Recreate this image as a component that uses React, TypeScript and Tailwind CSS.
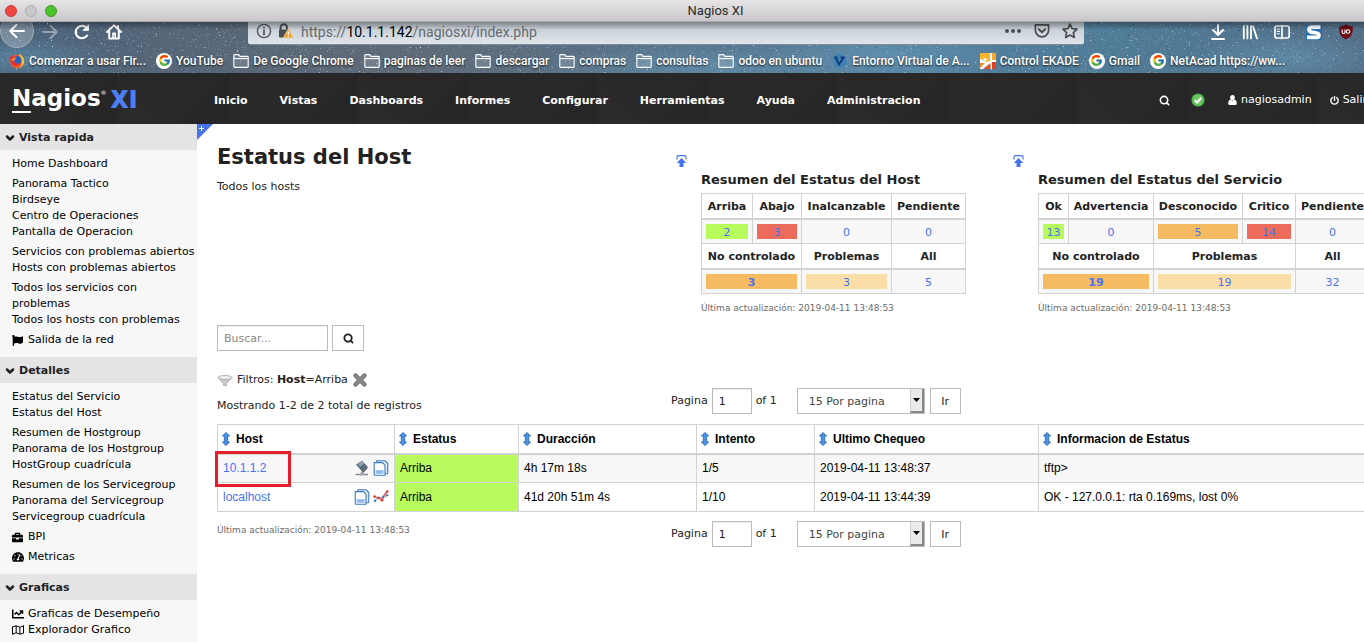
import React from "react";
import {
  FaBriefcase,
  FaChartLine,
  FaFlag,
  FaPowerOff,
  FaRegMap,
  FaTachometerAlt,
} from "react-icons/fa";
import { FcGoogle } from "react-icons/fc";
import { ChevronDown, Search } from "lucide-react";

/* ---------- Browser window ---------- */

const hues = ["#ffffff", "#d5e2ec", "#b4bec8", "#8fb6d2", "#26384c"];

const stars = (() => {
  let seed = 77;
  const next = () => {
    seed = (seed * 1103515245 + 12345) % 2147483648;
    return seed / 2147483648;
  };
  return Array.from({ length: 7000 }, (_, id) => ({
    id,
    x: Math.floor(next() * 1600),
    y: Math.floor(next() * 52),
    o: 0.12 + next() * next() * next() * 0.75,
    c: hues[Math.floor(next() * 5)],
  }));
})();

function StarField() {
  return (
    <svg className="absolute inset-0 h-full w-full" preserveAspectRatio="xMinYMin slice" aria-hidden="true">
      <defs>
        <linearGradient id="sky" x1="0" x2="1" y1="0" y2="0">
          <stop offset="0" stopColor="#4a647d" />
          <stop offset="0.12" stopColor="#566678" />
          <stop offset="0.3" stopColor="#5f6a77" />
          <stop offset="0.5" stopColor="#58748c" />
          <stop offset="0.68" stopColor="#54809e" />
          <stop offset="0.82" stopColor="#507c98" />
          <stop offset="1" stopColor="#546f88" />
        </linearGradient>
        <radialGradient id="glow">
          <stop offset="0" stopColor="#6aa3c4" stopOpacity="0.45" />
          <stop offset="1" stopColor="#6aa3c4" stopOpacity="0" />
        </radialGradient>
      </defs>
      <rect width="100%" height="100%" fill="url(#sky)" />
      <ellipse cx="20" cy="36" rx="90" ry="22" fill="url(#glow)" />
      <ellipse cx="700" cy="44" rx="170" ry="22" fill="url(#glow)" />
      <ellipse cx="880" cy="34" rx="120" ry="30" fill="url(#glow)" />
      <ellipse cx="1290" cy="36" rx="100" ry="26" fill="url(#glow)" />
      {stars.map((s) => (
        <rect key={s.id} x={s.x} y={s.y} width="1" height="1" fill={s.c} opacity={s.o} />
      ))}
    </svg>
  );
}

function TitleBar() {
  return (
    <div className="relative z-10 flex h-[22px] items-center border-b border-[#a9a7a9] bg-gradient-to-b from-[#e6e4e6] to-[#c9c7c9] pl-[5px]">
      <div className="flex gap-2">
        <span className="h-3 w-3 rounded-full border border-[#d03a35] bg-[#ee4540]" />
        <span className="h-3 w-3 rounded-full border border-[#b0aeb0] bg-[#c9c7c9]" />
        <span className="h-3 w-3 rounded-full border border-[#3f9d26] bg-[#4cc22c]" />
      </div>
      <div className="flex-1 pl-[10px] pt-px text-center text-[13px] text-[#2b2b2b]">Nagios XI</div>
    </div>
  );
}

function Stroke({ children, color = "#fff", w = 2 }: { children: React.ReactNode; color?: string; w?: number }) {
  return (
    <svg width="16" height="16" viewBox="0 0 16 16" fill="none" stroke={color} strokeWidth={w} strokeLinecap="round" strokeLinejoin="round" className="shrink-0">
      {children}
    </svg>
  );
}

function UrlBar() {
  return (
    <div className="flex h-[23px] min-w-0 flex-1 items-center rounded-b-[3px] border-b border-[#7b8d9c] bg-gradient-to-b from-[#bfc8cf] to-[#e0e5ea] pl-2 pr-[6px] text-[14px] text-[#666b70]">
      <div className="flex min-w-0 flex-1 items-center gap-[5px] pb-1">
        <Stroke color="#55595e" w={1.4}>
          <circle cx="8" cy="8" r="6.6" />
          <path d="M8 7.2V11.6M8 4.6V4.8" strokeWidth="1.8" />
        </Stroke>
        <svg width="17" height="16" viewBox="0 0 17 16" className="shrink-0">
          <path d="M3.6 7V4.4a3.2 3.2 0 0 1 6.4 0V7" fill="none" stroke="#4a4d50" strokeWidth="2" />
          <rect x="2" y="6.6" width="10" height="8" rx="1" fill="#4a4d50" />
          <path d="M11.4 5.2 16.6 15H6.2Z" fill="#f5a02c" stroke="#e4ddd2" strokeWidth="0.6" />
          <path d="M11.4 8.4v3M11.4 12.6v1.1" stroke="#fff" strokeWidth="1.3" />
        </svg>
        <span className="ml-[2px] mt-[2px] whitespace-nowrap">
          https://<span className="text-black">10.1.1.142</span>/nagiosxi/index.php
        </span>
      </div>
      <div className="flex items-center gap-3 pb-1">
        <svg width="18" height="16" viewBox="0 0 18 16" fill="#4a4d50">
          <circle cx="3" cy="8" r="2" />
          <circle cx="9" cy="8" r="2" />
          <circle cx="15" cy="8" r="2" />
        </svg>
        <Stroke color="#4a4d50" w={1.7}>
          <path d="M1.4 1.8h13.2v5.4a6.6 6.6 0 0 1-13.2 0Z" />
          <path d="M4.8 6.2 8 9.2l3.2-3" strokeWidth="2" />
        </Stroke>
        <Stroke color="#4a4d50" w={1.7}>
          <path d="m8 1.1 2.1 4.5 4.9.6-3.6 3.4.9 4.9L8 12.1l-4.3 2.4.9-4.9L1 6.2l4.9-.6Z" />
        </Stroke>
      </div>
    </div>
  );
}

function NavBar() {
  return (
    <div className="relative flex h-[26px] items-start pr-[10px]">
      <div className="flex h-[19px] w-[248px] shrink-0 items-center gap-4">
        <button aria-label="Atrás" className="-mt-px flex h-[34px] w-[34px] shrink-0 items-center justify-center rounded-full border border-[#a3a9af] bg-white/25">
          <Stroke>
            <path d="M15 8H1.5M7.5 1.8 1.3 8l6.2 6.2" />
          </Stroke>
        </button>
        <button aria-label="Adelante" className="-ml-2 opacity-40">
          <Stroke>
            <path d="M1 8h13.5M8.5 1.8 14.7 8l-6.2 6.2" />
          </Stroke>
        </button>
        <button aria-label="Recargar">
          <Stroke w={2.2}>
            <path d="M13 11.6A6.2 6.2 0 1 1 13.2 4.8" />
            <path d="M14.6 1v5.4H9.2Z" fill="#fff" strokeWidth="0.8" />
          </Stroke>
        </button>
        <button aria-label="Inicio">
          <Stroke>
            <path d="M1 8 8 1.2 15 8M3.2 7.4V14.6H12.8V7.4M12 2v2" />
            <path d="M7 14V9.4h2.2V14" strokeWidth="1.6" />
          </Stroke>
        </button>
      </div>
      <UrlBar />
      <div className="flex h-[19px] items-center gap-4 pl-[126px]">
        <button aria-label="Descargas">
          <Stroke>
            <path d="M8 1v9.5M3 6l5 5 5-5M2 15h12" />
          </Stroke>
        </button>
        <button aria-label="Catálogo">
          <Stroke>
            <path d="M1.8 2v12.4M5.4 2v12.4M9 2v12.4M11 2.4l4 12" strokeWidth="1.8" />
          </Stroke>
        </button>
        <button aria-label="Barra lateral">
          <Stroke w={1.7}>
            <rect x="1" y="2" width="14.2" height="12" rx="2" />
            <path d="M8 2v12" />
            <path d="M3.4 5h2M3.4 7.4h2M3.4 9.8h2" strokeWidth="1.1" />
          </Stroke>
        </button>
        <button aria-label="Extensión S">
          <svg width="16" height="16" viewBox="0 0 16 16">
            <rect y="1" width="16" height="15" fill="#2a6fb4" />
            <path d="M14.4 3.200H6C2 3.200 2 7.400 5.600 8.200L10.400 9C14 9.800 13.600 13.400 10.200 13.400H1" fill="none" stroke="#fff" strokeWidth="3.8" />
          </svg>
        </button>
        <button aria-label="Bloqueador">
          <svg width="16" height="16" viewBox="0 0 16 16">
            <path d="M8 .6C10.4 2 12.6 2.4 14.8 2.4c.2 6-.6 10-6.8 13C1.800 12.400 1 8.400 1.200 2.400 3.400 2.400 5.600 2 8 .6Z" fill="#6d0d14" />
            <path d="M4.200 5.600v2.600c0 1.700 2.800 1.700 2.800 0V5.600" fill="none" stroke="#fff" strokeWidth="1.100" />
            <circle cx="10" cy="7.500" r="1.800" fill="none" stroke="#fff" strokeWidth="1.100" />
          </svg>
        </button>
      </div>
    </div>
  );
}

function FolderIcon() {
  return (
    <svg width="16" height="16" viewBox="0 0 16 16" fill="#ffffff22" stroke="#fff" strokeWidth="1.1" className="shrink-0">
      <path d="M.8 13.6V2.400Q.8 1.600 1.600 1.600H5.600L7 3.400H14.400Q15.200 3.400 15.200 4.200V13.600Q15.200 14.400 14.400 14.400H1.600Q.8 14.400.8 13.600Z" />
      <path d="M.8 5.600H15.200" />
    </svg>
  );
}

function GoogleIcon() {
  return (
    <span className="flex h-4 w-4 shrink-0 items-center justify-center rounded-full bg-white">
      <FcGoogle size={13} />
    </span>
  );
}

function FirefoxIcon() {
  return (
    <svg width="16" height="16" viewBox="0 0 16 16" className="shrink-0">
      <circle cx="8" cy="8.500" r="6.800" fill="#f0562b" />
      <path d="M10 1c4 1.400 6 5 5 9-1 3.400-4 5.400-7 5.400 4-1 5-4 4.400-7C12 5.400 10.600 4 10 1Z" fill="#ffc02e" />
      <circle cx="8.400" cy="7.200" r="4.200" fill="#2b62c0" />
      <path d="M1 4.400C2 3.600 2.400 2.600 2.800 1.800 3.800 3.600 5.400 4 7.600 4.800 6.400 6 5 6.400 5.200 8.400c1 2.600 4 2.600 6 1.600-1.600 3.600-8 3.600-9.400-.8Z" fill="#e5322d" />
      <path d="M2.200 6.400C3.400 5 5.600 4.800 7.600 4.800 6 5.800 5 6.600 5.200 8.400Z" fill="#f8892c" />
    </svg>
  );
}

function VirtualIcon() {
  return (
    <svg width="16" height="16" viewBox="0 0 16 16" className="shrink-0">
      <circle cx="8" cy="8" r="7" fill="#3f83b5" />
      <path d="M2 4.500h3.500M8.500 4.500h4.500M4 5 7 11.500 11.300 5" fill="none" stroke="#123e7e" strokeWidth="2" />
    </svg>
  );
}

function EkadeIcon() {
  return (
    <svg width="16" height="16" viewBox="0 0 16 16" className="shrink-0">
      <rect width="16" height="16" fill="#fff" />
      <path d="M0 0h10v8L6 9 0 6Z" fill="#f7b42c" />
      <path d="M0 6 6 9 0 9Z" fill="#fff" />
      <path d="M3 4.500 8 6.500 4 8Z" fill="#fff" />
      <path d="M12 0H16v7h-4Z" fill="#f5a92b" />
      <path d="M3 16 10.500 10V16Z" fill="#e0502a" />
      <path d="M0 10h5L0 15Z" fill="#f08a28" />
      <path d="M12 9H16v7h-4Z" fill="#dd4520" />
    </svg>
  );
}

const bookmarks: [React.ReactNode, string][] = [
  [<FirefoxIcon />, "Comenzar a usar Fir..."],
  [<GoogleIcon />, "YouTube"],
  [<FolderIcon />, "De Google Chrome"],
  [<FolderIcon />, "paginas de leer"],
  [<FolderIcon />, "descargar"],
  [<FolderIcon />, "compras"],
  [<FolderIcon />, "consultas"],
  [<FolderIcon />, "odoo en ubuntu"],
  [<VirtualIcon />, "Entorno Virtual de A..."],
  [<EkadeIcon />, "Control EKADE"],
  [<GoogleIcon />, "Gmail"],
  [<GoogleIcon />, "NetAcad https://ww..."],
];

function BookmarksBar() {
  return (
    <div className="relative flex h-[25px] items-center gap-[10px] overflow-hidden pl-[9px]">
      {bookmarks.map(([icon, text]) => (
        <a key={text} href="#" className="flex shrink-0 items-center gap-1 whitespace-nowrap text-[12px] font-medium text-white [text-shadow:0_1px_2px_#000000cc]">
          {icon}
          {text}
        </a>
      ))}
    </div>
  );
}

/* ---------- Application header ---------- */

const menu = ["Inicio", "Vistas", "Dashboards", "Informes", "Configurar", "Herramientas", "Ayuda", "Administracion"];

function AppHeader() {
  return (
    <header className="relative flex h-[51px] items-center overflow-hidden bg-[#282828] text-white">
      <svg className="absolute inset-0 h-full w-full" aria-hidden="true">
        <defs>
          <pattern id="tri" width="240" height="51" patternUnits="userSpaceOnUse">
            <path d="M0 0h57v51H0Z" fill="#292929" />
            <path d="M67 51 117 0v51Z" fill="#262626" />
            <path d="M117 0l51 51h-51Z" fill="#2a2a2a" />
            <path d="M178 51 229 0v51Z" fill="#262626" />
          </pattern>
        </defs>
        <rect width="100%" height="100%" fill="url(#tri)" />
      </svg>
      <a href="#" className="relative flex w-[197px] shrink-0 items-center pl-3 leading-none">
        <span className="text-[23px] font-bold">
          <span className="border-b-2 border-white">N</span>agios
        </span>
        <span className="mb-3 text-[6px]">®</span>
        <span className="ml-1 font-['Open_Sans'] text-[25px] font-extrabold text-[#4c7ef3]">XI</span>
      </a>
      <nav className="relative flex flex-1 pl-px pt-[5px] text-[11px] font-bold">
        {menu.map((m) => (
          <a key={m} href="#" className="px-4">
            {m}
          </a>
        ))}
      </nav>
      <div className="relative -mr-[6px] flex shrink-0 items-center pt-[3px] text-[11px]">
        <button aria-label="Buscar" className="mr-[21px]">
          <Search size={11} strokeWidth={3.5} />
        </button>
        <svg width="14" height="14" viewBox="0 0 14 14" className="mr-[23px]">
          <circle cx="7" cy="7" r="6.600" fill="#4fb04a" />
          <circle cx="7" cy="7" r="5.200" fill="#6cc665" />
          <path d="m3.800 7.200 2.300 2.300 4.300-4.700" fill="none" stroke="#fff" strokeWidth="2" />
        </svg>
        <a href="#" className="mr-[18px] flex items-center gap-1">
          <svg width="9" height="10" viewBox="0 0 9 10" fill="currentColor">
            <ellipse cx="4.500" cy="2.700" rx="2.300" ry="2.600" />
            <path d="M2.200 4.600Q4.500 6.600 6.800 4.600 8.800 5.200 8.800 8.400 8.600 10 7.200 10H1.800Q.4 10 .2 8.400.2 5.200 2.200 4.600Z" />
          </svg>
          nagiosadmin
        </a>
        <a href="#" className="mr-[3px] flex items-center gap-1">
          <FaPowerOff size={9} />
          Salir
        </a>
      </div>
    </header>
  );
}

/* ---------- Sidebar ---------- */

type Item = { text: string; icon?: React.ReactNode };
type Section = { title: string; groups: Item[][] };

const plain = (...texts: string[]): Item[] => texts.map((text) => ({ text }));

const sections: Section[] = [
  {
    title: "Vista rapida",
    groups: [
      plain("Home Dashboard"),
      plain("Panorama Tactico", "Birdseye", "Centro de Operaciones", "Pantalla de Operacion"),
      plain("Servicios con problemas abiertos", "Hosts con problemas abiertos"),
      plain("Todos los servicios con problemas", "Todos los hosts con problemas"),
      [{ text: "Salida de la red", icon: <FaFlag size={11} /> }],
    ],
  },
  {
    title: "Detalles",
    groups: [
      plain("Estatus del Servicio", "Estatus del Host"),
      plain("Resumen de Hostgroup", "Panorama de los Hostgroup", "HostGroup cuadrícula"),
      plain("Resumen de los Servicegroup", "Panorama del Servicegroup", "Servicegroup cuadrícula"),
      [{ text: "BPI", icon: <FaBriefcase size={11} /> }],
      [{ text: "Metricas", icon: <FaTachometerAlt size={12} /> }],
    ],
  },
  {
    title: "Graficas",
    groups: [
      [
        { text: "Graficas de Desempeño", icon: <FaChartLine size={12} /> },
        { text: "Explorador Grafico", icon: <FaRegMap size={12} /> },
      ],
    ],
  },
];

function Sidebar() {
  return (
    <aside className="w-[197px] shrink-0 bg-[#f7f7f7] text-[11px] leading-4 text-black">
      {sections.map((s) => (
        <section key={s.title}>
          <h2 className="flex h-[26px] items-center gap-[3px] bg-[#e4e4e4] pl-1 pt-px font-bold text-[#222]">
            <ChevronDown size={12} strokeWidth={5} />
            {s.title}
          </h2>
          <div className="flex flex-col gap-1 pb-[9px] pl-3 pt-[6px]">
            {s.groups.map((g) => (
              <ul key={g[0].text}>
                {g.map((i) => (
                  <li key={i.text}>
                    <a href="#" className="flex items-center">
                      {i.icon && <span className="flex w-4 shrink-0">{i.icon}</span>}
                      {i.text}
                    </a>
                  </li>
                ))}
              </ul>
            ))}
          </div>
        </section>
      ))}
    </aside>
  );
}

/* ---------- Summary tables ---------- */

type Tone = "green" | "red" | "orange" | "pale" | "none";
const tones: Record<Tone, string> = {
  green: "bg-[#b7fb5c]",
  red: "bg-[#ed6b5a]",
  orange: "bg-[#f6ba61]",
  pale: "bg-[#fbdda8]",
  none: "",
};
type Cell = { v: string; tone?: Tone; span?: number; bold?: boolean };

function HeadRow({ cells }: { cells: [string, number?][] }) {
  return (
    <tr className="h-[25px] border-b-2 border-[#d2d2d2]">
      {cells.map(([t, span]) => (
        <th key={t} colSpan={span ?? 1} className="border-x border-t border-[#d2d2d2] p-0 pt-[3px] text-center font-bold">
          {t}
        </th>
      ))}
    </tr>
  );
}

function ValueRow({ cells }: { cells: Cell[] }) {
  return (
    <tr className="h-[25px] bg-[#f7f7f7]">
      {cells.map((c, i) => (
        <td key={i} colSpan={c.span ?? 1} className="border-x border-b border-[#d2d2d2] px-1 py-0 text-center">
          <a href="#" className={`block h-[15px] leading-[17px] text-[#4674ee] ${c.bold ? "font-bold" : ""} ${tones[c.tone ?? "none"]}`}>
            {c.v}
          </a>
        </td>
      ))}
    </tr>
  );
}

function Updated() {
  return <p className="text-[9px] leading-4 text-[#6c6c6c]">Última actualización: 2019-04-11 13:48:53</p>;
}

function Pin() {
  return (
    <button aria-label="Agregar al dashboard" className="mt-[31px] h-3 shrink-0">
      <svg width="11" height="12" viewBox="0 0 11 12">
        <path d="M1 4.500V2Q1 .6 2.400.6H8.600Q10 .6 10 2V4.500" fill="none" stroke="#4674ee" strokeWidth="1.200" />
        <path d="M5.500 3 10.300 8H7.500V12h-4V8H.7Z" fill="#4674ee" />
      </svg>
    </button>
  );
}

function Summary({ title, children, className }: { title: string; children: React.ReactNode; className: string }) {
  return (
    <section className="flex shrink-0 gap-[14px]">
      <Pin />
      <div className="pt-[46px]">
        <h2 className="pb-[3px] text-[13px] font-bold leading-5 text-[#222]">{title}</h2>
        <table className={`mb-[6px] table-fixed border-collapse border-t border-[#d2d2d2] ${className}`}>{children}</table>
        <Updated />
      </div>
    </section>
  );
}

/* ---------- Controls ---------- */

function Pager({ id }: { id: string }) {
  return (
    <form className="flex h-[26px] items-center" onSubmit={(e) => e.preventDefault()}>
      <label htmlFor={`page-${id}`} className="mr-1">
        Pagina
      </label>
      <input id={`page-${id}`} defaultValue="1" className="h-[26px] w-10 border border-[#bbb] px-[6px] shadow-[inset_0_1px_1px_#00000013]" />
      <span className="ml-1 mr-5">of 1</span>
      <div className="relative mr-[5px]">
        <select aria-label="Registros por pagina" className="h-[26px] w-32 appearance-none border border-[#bbb] bg-white pl-[11px] pt-px text-[#444]">
          <option>15 Por pagina</option>
        </select>
        <span className="pointer-events-none absolute bottom-px right-px top-px flex w-[14px] items-center justify-center border-b-2 border-l border-r-2 border-b-[#888] border-l-[#ccc] border-r-[#888] bg-[#ebebeb]">
          <svg width="7" height="4" viewBox="0 0 7 4">
            <path d="M0 0h7L3.500 4Z" fill="#000" />
          </svg>
        </span>
      </div>
      <button className="h-[26px] w-[31px] border border-[#bbb] bg-white pt-[2px]">Ir</button>
    </form>
  );
}

function SortArrow() {
  return (
    <svg width="8" height="14" viewBox="0 0 8 14" className="shrink-0">
      <path d="M4 .4 7.600 4H5.700v6h1.900L4 13.600.4 10H2.300V4H.4Z" fill="#4b93e6" stroke="#1d5fae" strokeWidth="0.800" />
    </svg>
  );
}

function PagesIcon() {
  return (
    <svg width="16" height="16" viewBox="0 0 16 16" fill="#dcebfa" stroke="#3f78b8" strokeWidth="1.100">
      <path d="M3.800.8H12L14.800 3.500V12.500Q14.800 13.800 13.500 13.800H3.800Z" />
      <path d="M1.200 2.600H9.300L12 5.200V15.200H2.200Q1.200 15.200 1.200 14.200Z" fill="#fff" />
      <path d="M2.600 10.200h8v3.600h-8Z" fill="#8dbbee" stroke="none" />
    </svg>
  );
}

function SwitchIcon() {
  return (
    <svg width="16" height="16" viewBox="0 0 16 16">
      <path d="M2 4.500 8 .8 13.500 6.500 8.500 12Z" fill="#5a6b7c" />
      <path d="M4 3.500 8 1l2.200 2.600L5.800 7Z" fill="#93a3b1" />
      <path d="M8.500 12 13.500 6.500V8L9 13Z" fill="#2f3c49" />
      <path d="M8 11.500V14M1.500 14.500h12.500" stroke="#8a8a92" strokeWidth="1.600" />
      <rect x="6" y="13" width="4" height="2.500" fill="#a9a2b4" />
    </svg>
  );
}

function GraphIcon() {
  return (
    <svg width="16" height="16" viewBox="0 0 16 16" fill="none">
      <path d="M2 11.500 6 8 10 9.500 14 6" stroke="#6c8fbe" strokeWidth="1" />
      <path d="M1.500 7.500 5.500 9 9 11 11.500 5.500 14.300 2.500" stroke="#d93a3a" strokeWidth="1.200" />
      <g fill="#5079b0">
        <circle cx="2" cy="11.800" r="1.300" />
        <circle cx="10" cy="7.600" r="1.100" />
        <circle cx="14" cy="6.200" r="1.300" />
      </g>
      <g fill="#d93a3a">
        <circle cx="1.600" cy="7.500" r="1.300" />
        <circle cx="5.500" cy="9" r="1.200" />
        <circle cx="9" cy="11.200" r="1.400" />
        <circle cx="14.300" cy="2.600" r="1.300" />
      </g>
    </svg>
  );
}

const columns = ["Host", "Estatus", "Duracción", "Intento", "Ultimo Chequeo", "Informacion de Estatus"];

const rows = [
  {
    host: "10.1.1.2",
    marked: true,
    icons: [<SwitchIcon key="s" />, <PagesIcon key="p" />],
    cells: ["4h 17m 18s", "1/5", "2019-04-11 13:48:37", "tftp>"],
  },
  {
    host: "localhost",
    marked: false,
    icons: [<PagesIcon key="p" />, <GraphIcon key="g" />],
    cells: ["41d 20h 51m 4s", "1/10", "2019-04-11 13:44:39", "OK - 127.0.0.1: rta 0.169ms, lost 0%"],
  },
];

function HostTable() {
  return (
    <table className="w-full min-w-[1160px] table-fixed border-collapse font-['Liberation_Sans',Arial,sans-serif] text-[12px] text-black">
      <colgroup>
        <col className="w-[177px]" />
        <col className="w-[124px]" />
        <col className="w-[178px]" />
        <col className="w-[118px]" />
        <col className="w-[224px]" />
        <col />
      </colgroup>
      <thead>
        <tr className="h-[29px] border-b-2 border-[#d2d2d2]">
          {columns.map((c) => (
            <th key={c} className="border-x border-t border-[#d2d2d2] px-1 py-0 text-left font-bold">
              <span className="flex items-center gap-[6px]">
                <SortArrow />
                {c}
              </span>
            </th>
          ))}
        </tr>
      </thead>
      <tbody>
        {rows.map((r) => (
          <tr key={r.host} className="h-[29px] odd:bg-[#f7f7f7]">
            <td className="relative border border-[#d2d2d2] px-[5px] py-0">
              <div className="flex items-center">
                <a href="#" className="flex-1 text-[#4674ee]">
                  {r.host}
                </a>
                <span className="flex gap-[3px]">{r.icons}</span>
              </div>
              {r.marked && <span className="absolute -left-[3px] -top-1 h-[36px] w-[76px] border-[3px] border-[#e41e2b]" />}
            </td>
            <td className="border border-[#d2d2d2] bg-[#b7fb5c] px-[5px] py-0">Arriba</td>
            {r.cells.map((c) => (
              <td key={c} className="border border-[#d2d2d2] px-[5px] py-0">
                {c}
              </td>
            ))}
          </tr>
        ))}
      </tbody>
    </table>
  );
}

function Main() {
  return (
    <main className="relative min-w-0 flex-1 overflow-hidden bg-white pl-5 text-[11px] leading-4 text-[#222]">
      <button aria-label="Agregar" className="absolute left-0 top-0 h-4 w-4">
        <svg width="16" height="16" viewBox="0 0 16 16">
          <path d="M0 0h16L0 16Z" fill="#4674ee" />
          <path d="M4.500 2v5M2 4.500h5" stroke="#fff" />
        </svg>
      </button>
      <div className="flex h-[201px]">
        <div className="w-[459px] shrink-0 pt-[19px]">
          <h1 className="text-[21px] font-bold leading-7">Estatus del Host</h1>
          <p className="pt-2">Todos los hosts</p>
        </div>
        <div className="flex gap-[47px]">
          <Summary title="Resumen del Estatus del Host" className="w-[265px]">
            <colgroup>
              <col className="w-[51px]" />
              <col className="w-[49px]" />
              <col className="w-[90px]" />
              <col className="w-[74px]" />
            </colgroup>
            <tbody>
              <HeadRow cells={[["Arriba"], ["Abajo"], ["Inalcanzable"], ["Pendiente"]]} />
              <ValueRow cells={[{ v: "2", tone: "green" }, { v: "3", tone: "red" }, { v: "0" }, { v: "0" }]} />
              <HeadRow cells={[["No controlado", 2], ["Problemas"], ["All"]]} />
              <ValueRow cells={[{ v: "3", tone: "orange", span: 2, bold: true }, { v: "3", tone: "pale" }, { v: "5" }]} />
            </tbody>
          </Summary>
          <Summary title="Resumen del Estatus del Servicio" className="w-[332px]">
            <colgroup>
              <col className="w-[30px]" />
              <col className="w-[85px]" />
              <col className="w-[89px]" />
              <col className="w-[53px]" />
              <col className="w-[74px]" />
            </colgroup>
            <tbody>
              <HeadRow cells={[["Ok"], ["Advertencia"], ["Desconocido"], ["Critico"], ["Pendiente"]]} />
              <ValueRow
                cells={[{ v: "13", tone: "green" }, { v: "0" }, { v: "5", tone: "orange" }, { v: "14", tone: "red" }, { v: "0" }]}
              />
              <HeadRow cells={[["No controlado", 2], ["Problemas", 2], ["All"]]} />
              <ValueRow
                cells={[{ v: "19", tone: "orange", span: 2, bold: true }, { v: "19", tone: "pale", span: 2 }, { v: "32" }]}
              />
            </tbody>
          </Summary>
        </div>
      </div>
      <form className="flex gap-1" onSubmit={(e) => e.preventDefault()}>
        <input
          aria-label="Buscar"
          placeholder="Buscar..."
          className="h-[26px] w-[111px] border border-[#bbb] px-[6px] shadow-[inset_0_1px_1px_#00000013] placeholder:text-[#888]"
        />
        <button aria-label="Buscar" className="flex h-[26px] w-8 items-center justify-center border border-[#bbb] bg-white">
          <Search size={11} strokeWidth={4} />
        </button>
      </form>
      <div className="flex pt-5">
        <div className="w-[454px] shrink-0 pt-px">
          <div className="flex items-center gap-1">
            <svg width="16" height="16" viewBox="0 0 16 16">
              <path d="M1 5.500 6.500 11.500v2h3v-2L15 5.500Z" fill="#c9c9c9" stroke="#a3a3a3" strokeWidth="0.800" />
              <ellipse cx="8" cy="5.500" rx="7" ry="2" fill="#eee" stroke="#a3a3a3" strokeWidth="0.800" />
            </svg>
            <span>
              Filtros: <b>Host</b>=Arriba
            </span>
            <button aria-label="Quitar filtro">
              <svg width="16" height="16" viewBox="0 0 16 16">
                <path d="m3.500 3.500 9 9M12.500 3.500l-9 9" stroke="#5e5e5e" strokeWidth="4.200" strokeLinecap="round" />
                <path d="m3.500 3.500 9 9M12.500 3.500l-9 9" stroke="#8b8b8b" strokeWidth="2.600" strokeLinecap="round" />
              </svg>
            </button>
          </div>
          <p className="pt-[10px]">Mostrando 1-2 de 2 total de registros</p>
        </div>
        <div className="pb-[10px] pt-[17px]">
          <Pager id="top" />
        </div>
      </div>
      <HostTable />
      <div className="flex pt-[9px]">
        <div className="w-[454px] shrink-0 pt-[1px]">
          <Updated />
        </div>
        <Pager id="bottom" />
      </div>
    </main>
  );
}

export default function App() {
  return (
    <div className="flex min-h-screen flex-col overflow-hidden bg-white font-['DejaVu_Sans',Verdana,sans-serif]">
      <div className="relative overflow-hidden font-[Roboto,sans-serif]">
        <TitleBar />
        <div className="relative">
          <StarField />
          <NavBar />
          <BookmarksBar />
          <div className="pointer-events-none absolute inset-x-0 top-0 h-2 bg-gradient-to-b from-black/35 to-transparent" />
        </div>
      </div>
      <AppHeader />
      <div className="flex flex-1">
        <Sidebar />
        <Main />
      </div>
    </div>
  );
}
